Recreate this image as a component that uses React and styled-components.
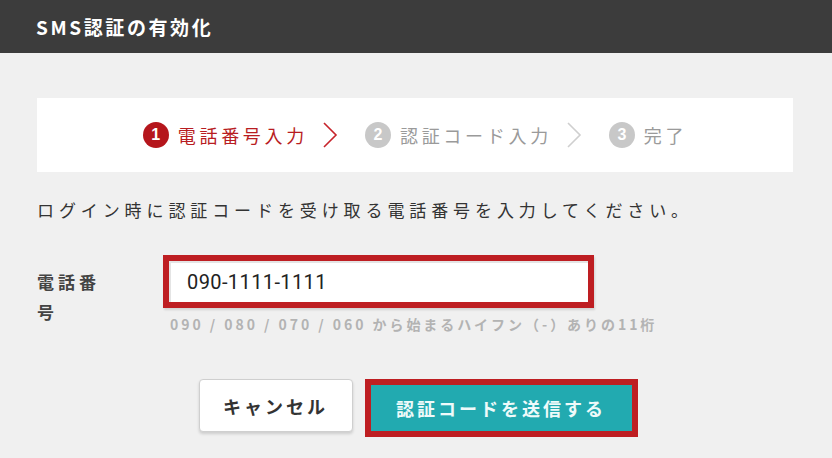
import React from 'react';
import styled, { createGlobalStyle } from 'styled-components';

const GlobalStyle = createGlobalStyle`
  body {
    margin: 0;
    background: #f0f0f0;
    font-family: "Noto Sans CJK JP", "Noto Sans", sans-serif;
  }
`;

const Header = styled.header`
  height: 53px;
  background: #3c3c3c;
  display: flex;
  align-items: center;
  padding: 0 36px;
  color: #ffffff;
  font-size: 19px;
  font-weight: 700;
  letter-spacing: 2.6px;
`;

const Body = styled.main`
  padding: 45px 39px 0 37px;
`;

// Steps
const Steps = styled.div`
  height: 74px;
  background: #ffffff;
  display: flex;
  align-items: center;
  justify-content: center;
`;

const Step = styled.div`
  display: flex;
  align-items: center;
  gap: 9px;
  color: ${(p) => (p.$active ? '#b81c22' : '#9a9a9a')};
  font-size: 18px;
  letter-spacing: 3.7px;
`;

const Num = styled.span`
  width: 26px;
  height: 26px;
  border-radius: 50%;
  background: ${(p) => (p.$active ? '#b5161c' : '#c8c8c8')};
  color: #ffffff;
  font-family: "Liberation Sans", Arial, sans-serif;
  font-weight: 700;
  font-size: 16px;
  letter-spacing: 0;
  display: flex;
  align-items: center;
  justify-content: center;
`;

const Chevron = ({ active }) => (
  <svg width="16" height="26" viewBox="0 0 16 26" style={{ margin: '0 27px 0 14px' }}>
    <path d="M2 1 L14 13 L2 25" fill="none" stroke={active ? '#c7242b' : '#cfcfcf'} strokeWidth="1.6" />
  </svg>
);

const Lead = styled.p`
  margin: 25px 0 0;
  font-size: 17px;
  letter-spacing: 4.9px;
  color: #333333;
`;

// Form
const Row = styled.div`
  margin-top: 33px;
  display: grid;
  grid-template-columns: 78px 1fr;
  column-gap: 48px;
`;

const Label = styled.label`
  padding-top: 12px;
  font-size: 17px;
  font-weight: 700;
  letter-spacing: 4px;
  line-height: 30px;
  color: #444444;
`;

const Field = styled.div`
  display: flex;
  flex-direction: column;
`;

const Input = styled.input`
  box-sizing: border-box;
  width: 431px;
  height: 53px;
  border: 6px solid #be1e22;
  background: #ffffff;
  box-shadow: inset 2px 2px 0 #e4e4e4, 1px 2px 2px rgba(0, 0, 0, 0.12);
  padding: 0 18px;
  font-family: Roboto, "Liberation Sans", sans-serif;
  font-size: 20px;
  letter-spacing: 0.4px;
  color: #222222;
  outline: none;
`;

const Hint = styled.div`
  margin: 6px 0 0 7px;
  font-size: 14px;
  font-weight: 700;
  letter-spacing: 2.95px;
  color: #b3b3b3;
`;

const Actions = styled.div`
  margin-top: 45px;
  display: flex;
  justify-content: center;
  align-items: flex-start;
  gap: 12px;
  padding-left: 6px;
`;

const Button = styled.button`
  box-sizing: border-box;
  font-family: "Noto Sans CJK JP", sans-serif;
  font-size: 18px;
  font-weight: 700;
  letter-spacing: 3px;
  cursor: pointer;
  display: flex;
  align-items: center;
  justify-content: center;
  ${(p) =>
    p.$primary
      ? `
    width: 273px;
    height: 58px;
    background: #22aab0;
    border: 6px solid #be1e22;
    color: #eefafa;
  `
      : `
    width: 154px;
    height: 53px;
    background: #ffffff;
    border: 1px solid #cfcfcf;
    border-radius: 4px;
    box-shadow: 0 2px 3px rgba(0, 0, 0, 0.15);
    color: #333333;
  `}
`;

export default function App() {
  return (
    <>
      <GlobalStyle />
      <Header>SMS認証の有効化</Header>
      <Body>
        <Steps>
          <Step $active>
            <Num $active>1</Num>電話番号入力
          </Step>
          <Chevron active />
          <Step>
            <Num>2</Num>認証コード入力
          </Step>
          <Chevron />
          <Step>
            <Num>3</Num>完了
          </Step>
        </Steps>
        <Lead>ログイン時に認証コードを受け取る電話番号を入力してください。</Lead>
        <Row>
          <Label htmlFor="tel">電話番号</Label>
          <Field>
            <Input id="tel" defaultValue="090-1111-1111" />
            <Hint>090 / 080 / 070 / 060 から始まるハイフン（-）ありの11桁</Hint>
          </Field>
        </Row>
        <Actions>
          <Button>キャンセル</Button>
          <Button $primary>認証コードを送信する</Button>
        </Actions>
      </Body>
    </>
  );
}
